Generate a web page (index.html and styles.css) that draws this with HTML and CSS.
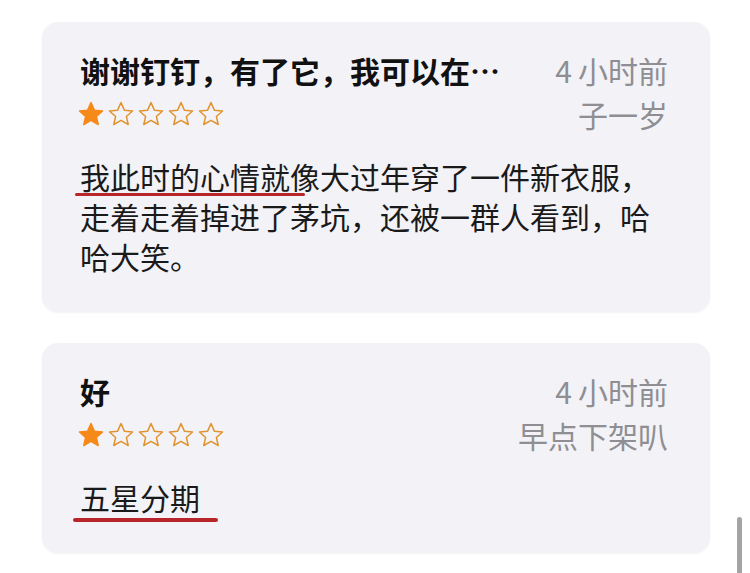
FILE: index.html
```html
<!DOCTYPE html>
<html lang="zh-CN">
<head>
    <meta charset="UTF-8">
    <meta name="viewport" content="width=device-width, initial-scale=1.0">
    <title>评论</title>
    <link rel="stylesheet" href="styles.css">
</head>
<body>

    <div class="review">
        <div class="review-head">
            <div class="review-title">谢谢钉钉，有了它，我可以在家上网课了</div>
            <div class="review-time"><span class="num">4</span>小时前</div>
            <div class="stars">
                <svg class="star full" viewBox="0 0 24 24"><path d="M12 2.2l2.9 6.5 7 .7-5.3 4.7 1.6 6.9L12 17.4 5.8 21l1.6-6.9L2.1 9.4l7-.7z"/></svg>
                <svg class="star" viewBox="0 0 24 24"><path d="M12 2.2l2.9 6.5 7 .7-5.3 4.7 1.6 6.9L12 17.4 5.8 21l1.6-6.9L2.1 9.4l7-.7z"/></svg>
                <svg class="star" viewBox="0 0 24 24"><path d="M12 2.2l2.9 6.5 7 .7-5.3 4.7 1.6 6.9L12 17.4 5.8 21l1.6-6.9L2.1 9.4l7-.7z"/></svg>
                <svg class="star" viewBox="0 0 24 24"><path d="M12 2.2l2.9 6.5 7 .7-5.3 4.7 1.6 6.9L12 17.4 5.8 21l1.6-6.9L2.1 9.4l7-.7z"/></svg>
                <svg class="star" viewBox="0 0 24 24"><path d="M12 2.2l2.9 6.5 7 .7-5.3 4.7 1.6 6.9L12 17.4 5.8 21l1.6-6.9L2.1 9.4l7-.7z"/></svg>
            </div>
            <div class="review-author">子一岁</div>
        </div>
        <p class="review-body"><span class="mark mark-one">我此时的心情就</span>像大过年穿了一件新衣服，走着走着掉进了茅坑，还被一群人看到，哈哈大笑。</p>
    </div>

    <div class="review">
        <div class="review-head">
            <div class="review-title">好</div>
            <div class="review-time"><span class="num">4</span>小时前</div>
            <div class="stars">
                <svg class="star full" viewBox="0 0 24 24"><path d="M12 2.2l2.9 6.5 7 .7-5.3 4.7 1.6 6.9L12 17.4 5.8 21l1.6-6.9L2.1 9.4l7-.7z"/></svg>
                <svg class="star" viewBox="0 0 24 24"><path d="M12 2.2l2.9 6.5 7 .7-5.3 4.7 1.6 6.9L12 17.4 5.8 21l1.6-6.9L2.1 9.4l7-.7z"/></svg>
                <svg class="star" viewBox="0 0 24 24"><path d="M12 2.2l2.9 6.5 7 .7-5.3 4.7 1.6 6.9L12 17.4 5.8 21l1.6-6.9L2.1 9.4l7-.7z"/></svg>
                <svg class="star" viewBox="0 0 24 24"><path d="M12 2.2l2.9 6.5 7 .7-5.3 4.7 1.6 6.9L12 17.4 5.8 21l1.6-6.9L2.1 9.4l7-.7z"/></svg>
                <svg class="star" viewBox="0 0 24 24"><path d="M12 2.2l2.9 6.5 7 .7-5.3 4.7 1.6 6.9L12 17.4 5.8 21l1.6-6.9L2.1 9.4l7-.7z"/></svg>
            </div>
            <div class="review-author">早点下架叭</div>
        </div>
        <p class="review-body"><span class="mark mark-two">五星分期</span></p>
    </div>

    <div class="scrollbar"></div>

</body>
</html>
```

FILE: styles.css
```css
body {
    margin: 0;
    padding: 22px 40px 0 42px;
    background-color: #fff;
    font-family: "Noto Sans CJK SC", "Noto Sans", sans-serif;
    overflow: hidden;
}
.review {
    background-color: #f3f3f7;
    border-radius: 16px;
    padding: 28px 42px 36px 38px;
    margin-bottom: 31px;
    box-shadow: 0 1px 2px rgba(0,0,0,0.05);
}
.review-head {
    display: grid;
    grid-template-columns: minmax(0, 1fr) auto;
    grid-template-rows: 40px 36px;
    column-gap: 40px;
    row-gap: 6px;
    align-items: center;
}
.review-title {
    min-width: 0;
    font-size: 30px;
    line-height: 40px;
    font-weight: bold;
    color: #111;
    white-space: nowrap;
    overflow: hidden;
    text-overflow: ellipsis;
}
.stars {
    display: flex;
    gap: 2px;
    margin-left: -3px;
    align-items: center;
}
.star {
    width: 28px;
    height: 28px;
    fill: none;
    stroke: #e0932f;
    stroke-width: 1.3;
    stroke-linejoin: round;
}
.star.full {
    fill: #f5891a;
    stroke: #f5891a;
}
.review-time,
.review-author {
    text-align: right;
    color: #8e8e93;
    font-size: 30px;
    line-height: 36px;
}
.num {
    margin-right: 6px;
}
.review-body {
    margin: 24px 0 0 0;
    font-size: 30px;
    line-height: 40px;
    color: #1a1a1a;
}
.mark {
    display: inline-block;
    vertical-align: top;
    position: relative;
}
.mark::after {
    content: "";
    position: absolute;
    background-color: #b8262c;
    border-radius: 2px;
}
.mark-one::after {
    left: -5px;
    right: -15px;
    top: 37px;
    height: 3px;
}
.mark-two::after {
    left: -7px;
    right: -18px;
    top: 41px;
    height: 4px;
}
.scrollbar {
    position: fixed;
    right: 8px;
    bottom: 0;
    width: 5px;
    height: 56px;
    border-radius: 3px 3px 0 0;
    background-color: #a4a4a4;
}
```
